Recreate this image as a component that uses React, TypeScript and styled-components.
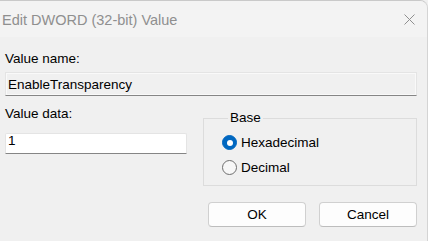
import React, { useState } from "react";
import styled, { createGlobalStyle } from "styled-components";

const GlobalStyle = createGlobalStyle`
	html, body {
		margin: 0;
		padding: 0;
		background: #f0f0f0;
	}
	body {
		font-family: "Liberation Sans", Arial, sans-serif;
		font-size: 13.5px;
		color: #000;
	}
`;

const Window = styled.div`
	width: 428px;
	height: 241px;
	box-sizing: border-box;
	background: #f0f0f0;
	border-top: 1px solid #c9c9c9;
	border-right: 1px solid #d4d4d4;
	border-top-right-radius: 8px;
	overflow: hidden;
`;

const TitleBar = styled.div`
	height: 36px;
	display: flex;
	align-items: center;
	justify-content: space-between;
	padding-left: 2px;
	background: #f3f3f3;
`;

const Title = styled.div`
	font-size: 14.5px;
	color: #8f8f8f;
	line-height: 18px;
	margin-top: 1px;
`;

const CloseButton = styled.div`
	width: 46px;
	height: 36px;
	display: flex;
	align-items: center;
	justify-content: center;
	margin-right: -5px;
`;

const Content = styled.div`
	padding: 14px 10px 0 5px;
`;

const Label = styled.div`
	line-height: 16px;
	height: 16px;
`;

const NameField = styled.div`
	margin-top: 5px;
	height: 24px;
	box-sizing: border-box;
	border: 1px solid #e4e4e4;
	border-bottom: 1px solid #858585;
	background: #f0f0f0;
	box-shadow: inset 0 0 0 1px #f9f9f9;
	padding: 4px 0 0 2px;
	line-height: 16px;
`;

const DataRow = styled.div`
	display: grid;
	grid-template-columns: 182px 214px;
	column-gap: 16px;
	margin-top: 10px;
`;

const DataField = styled.div`
	margin-top: 11px;
	height: 21px;
	box-sizing: border-box;
	background: #fff;
	border: 1px solid #e4e4e4;
	border-bottom: 1px solid #858585;
	border-radius: 2px 2px 0 0;
	padding: 0 0 0 2px;
	line-height: 14px;
`;

const GroupBox = styled.fieldset`
	margin: 4px 0 0 0;
	padding: 4px 0 0 18px;
	height: 76px;
	box-sizing: border-box;
	border: 1px solid #dcdcdc;
	border-radius: 0;
`;

const Legend = styled.legend`
	padding: 0 2px;
	margin-left: 6px;
	line-height: 16px;
`;

const RadioRow = styled.label`
	display: flex;
	align-items: center;
	gap: 4px;
	height: 25px;
	line-height: 16px;
	cursor: default;
`;

const RadioCircle = styled.span<{ $checked: boolean }>`
	width: 15px;
	height: 15px;
	box-sizing: border-box;
	border-radius: 50%;
	display: flex;
	align-items: center;
	justify-content: center;
	background: ${({ $checked }) => ($checked ? "#0067c0" : "#f7f7f7")};
	border: 1px solid ${({ $checked }) => ($checked ? "#0067c0" : "#6e6e6e")};

	&::after {
		content: "";
		display: ${({ $checked }) => ($checked ? "block" : "none")};
		width: 6px;
		height: 6px;
		border-radius: 50%;
		background: #fff;
	}
`;

const ButtonRow = styled.div`
	display: flex;
	justify-content: flex-end;
	gap: 13px;
	margin-top: 16px;
`;

const Button = styled.button`
	width: 98px;
	height: 25px;
	box-sizing: border-box;
	background: #fdfdfd;
	border: 1px solid #d0d0d0;
	border-bottom-color: #bdbdbd;
	border-radius: 4px;
	font-family: "Liberation Sans", Arial, sans-serif;
	font-size: 13.5px;
	color: #000;
	padding: 0;
`;

const App = () => {
	const [base, setBase] = useState("hex");

	return (
		<>
			<GlobalStyle />
			<Window>
				<TitleBar>
					<Title>Edit DWORD (32-bit) Value</Title>
					<CloseButton>
						<svg width="11" height="11" viewBox="0 0 11 11">
							<path d="M0.5 0.5L10.5 10.5M10.5 0.5L0.5 10.5" stroke="#8f8f8f" strokeWidth="1" />
						</svg>
					</CloseButton>
				</TitleBar>
				<Content>
					<Label>Value name:</Label>
					<NameField>EnableTransparency</NameField>
					<DataRow>
						<div>
							<Label>Value data:</Label>
							<DataField>1</DataField>
						</div>
						<GroupBox>
							<Legend>Base</Legend>
							<RadioRow onClick={() => setBase("hex")}>
								<RadioCircle $checked={base === "hex"} />
								Hexadecimal
							</RadioRow>
							<RadioRow onClick={() => setBase("dec")}>
								<RadioCircle $checked={base === "dec"} />
								Decimal
							</RadioRow>
						</GroupBox>
					</DataRow>
					<ButtonRow>
						<Button>OK</Button>
						<Button>Cancel</Button>
					</ButtonRow>
				</Content>
			</Window>
		</>
	);
};

export default App;
